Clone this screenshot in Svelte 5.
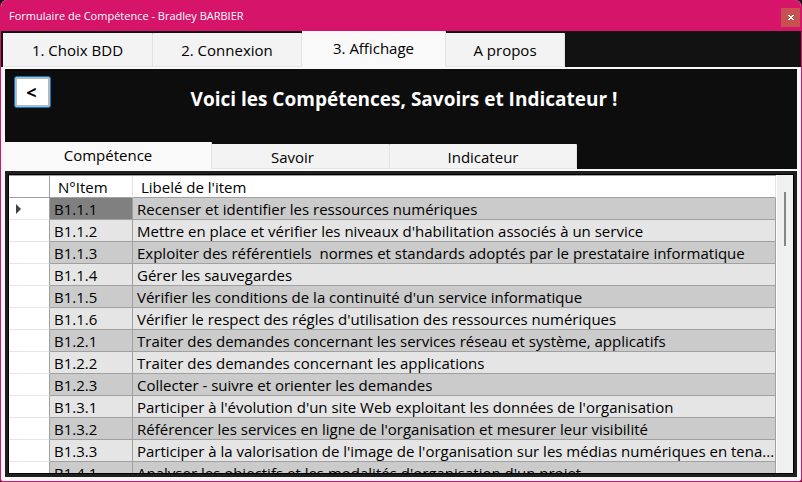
<script>
  const tabs = [
    { label: '1. Choix BDD', size: 150 },
    { label: '2. Connexion', size: 149 },
    { label: '3. Affichage', size: 144 },
    { label: 'A propos', size: 119 }
  ];
  const subTabs = [
    { label: 'Compétence', size: 207 },
    { label: 'Savoir', size: 178 },
    { label: 'Indicateur', size: 187 }
  ];
  const rows = [
    ['B1.1.1', 'Recenser et identifier les ressources numériques'],
    ['B1.1.2', "Mettre en place et vérifier les niveaux d'habilitation associés à un service"],
    ['B1.1.3', 'Exploiter des référentiels  normes et standards adoptés par le prestataire informatique'],
    ['B1.1.4', 'Gérer les sauvegardes'],
    ['B1.1.5', "Vérifier les conditions de la continuité d'un service informatique"],
    ['B1.1.6', "Vérifier le respect des régles d'utilisation des ressources numériques"],
    ['B1.2.1', 'Traiter des demandes concernant les services réseau et système, applicatifs'],
    ['B1.2.2', 'Traiter des demandes concernant les applications'],
    ['B1.2.3', 'Collecter - suivre et orienter les demandes'],
    ['B1.3.1', "Participer à l'évolution d'un site Web exploitant les données de l'organisation"],
    ['B1.3.2', "Référencer les services en ligne de l'organisation et mesurer leur visibilité"],
    ['B1.3.3', "Participer à la valorisation de l'image de l'organisation sur les médias numériques en tena..."],
    ['B1.4.1', "Analyser les objectifs et les modalités d'organisation d'un projet"]
  ];
  let activeTab = $state(2);
  let activeSub = $state(0);
  let selected = $state(0);
</script>

<div class="window">
  <header class="titlebar">
    <span class="title">Formulaire de Compétence - Bradley BARBIER</span>
    <button class="close" aria-label="Fermer">
      <svg width="6" height="5" viewBox="0 0 6 5" shape-rendering="crispEdges" aria-hidden="true">
        <path d="M0 0h2v1h2v-1h2v1h-1v1h-1v1h1v1h1v1h-2v-1h-2v1h-2v-1h1v-1h1v-1h-1v-1h-1z" fill="#fff" />
      </svg>
    </button>
  </header>

  <nav class="tabs" aria-label="Étapes">
    {#each tabs as tab, i}
      <button class="tab" class:active={activeTab === i} style:width="{tab.size}px" onclick={() => (activeTab = i)}>{tab.label}</button>
    {/each}
  </nav>

  <main class="page">
    <section class="banner">
      <button class="back">&lt;</button>
      <h1>Voici les Compétences, Savoirs et Indicateur !</h1>
    </section>

    <nav class="tabs sub" aria-label="Catégories">
      {#each subTabs as tab, i}
        <button class="tab" class:active={activeSub === i} class:spaced={tab.label === 'Savoir'} style:width="{tab.size}px" onclick={() => (activeSub = i)}>{tab.label}</button>
      {/each}
    </nav>

    <section class="frame">
      <div class="grid">
        <div class="viewport">
          <table>
            <colgroup>
              <col class="c-mark" />
              <col class="c-item" />
              <col />
            </colgroup>
            <thead>
              <tr>
                <td class="mark"></td>
                <th>N°Item</th>
                <th>Libelé de l'item</th>
              </tr>
            </thead>
            <tbody>
              {#each rows as [code, label], i}
                <tr onclick={() => (selected = i)}>
                  <td class="mark">
                    {#if selected === i}
                      <svg width="5" height="10" viewBox="0 0 5 10" aria-hidden="true"><path d="M0 0L5 5L0 10z" fill="#404040" /></svg>
                    {/if}
                  </td>
                  <td class:selected={selected === i}>{code}</td>
                  <td>{label}</td>
                </tr>
              {/each}
            </tbody>
          </table>
        </div>
        <div class="scrollbar"><div class="thumb"></div></div>
      </div>
    </section>
  </main>
</div>

<style>
  :global(body) {
    margin: 0;
    background: #201418;
  }
  .window {
    box-sizing: border-box;
    height: 100vh;
    display: flex;
    flex-direction: column;
    border: 1px solid #d5146a;
    border-top: 0;
    border-radius: 7px 7px 3px 3px;
    overflow: hidden;
    background: #f7f7f7;
    color: #000;
    font-family: 'Segoe UI', 'Open Sans', 'Noto Sans', sans-serif;
    font-size: 15px;
  }
  button {
    font: inherit;
    color: inherit;
    margin: 0;
    padding: 0;
  }
  .titlebar {
    flex: none;
    height: 31px;
    display: flex;
    align-items: center;
    justify-content: space-between;
    padding: 0 1px 0 8px;
    background: #d5146a;
    color: #fff;
    font-size: 11px;
  }
  .close {
    width: 19px;
    height: 19px;
    margin-top: 4px;
    display: flex;
    align-items: center;
    justify-content: center;
    border: 0;
    background: #c75050;
  }
  .tabs {
    flex: none;
    display: flex;
    align-items: flex-end;
    height: 36px;
    padding-left: 2px;
    background: #121212;
    border-bottom: 2px solid #f9f9f9;
  }
  .tab {
    box-sizing: border-box;
    height: 34px;
    border: 0;
    border-right: 1px solid #e2e2e2;
    border-bottom: 1px solid #e5e5e5;
    border-radius: 0 1px 0 0;
    background: #f3f3f3;
  }
  .tab.active {
    height: 36px;
    padding-bottom: 2px;
    border-bottom-color: #f9f9f9;
    background: #f9f9f9;
  }
  .page {
    flex: 1;
    min-height: 0;
    display: flex;
    flex-direction: column;
    margin: 0 4px 4px;
  }
  .banner {
    flex: none;
    display: flex;
    align-items: flex-start;
    height: 73px;
    background: #0d0d0d;
    color: #fff;
  }
  .back {
    box-sizing: border-box;
    flex: none;
    width: 37px;
    height: 32px;
    margin: 7px 0 0 9px;
    padding-right: 2px;
    border: 1px solid #0078d4;
    border-radius: 3px;
    box-shadow: inset 0 0 0 2px #b8b8b8;
    background: #fff;
    color: #000;
    font-size: 18px;
    font-weight: 700;
    line-height: 28px;
  }
  h1 {
    flex: 1;
    margin: 17px 40px 0 0;
    text-align: center;
    font-size: 19px;
    line-height: 26px;
    font-weight: 700;
  }
  .sub {
    height: 27px;
    padding-left: 0;
    background: #0d0d0d;
  }
  .sub .tab {
    height: 25px;
    padding-top: 2px;
  }
  .sub .tab.active {
    height: 27px;
  }
  .sub .spaced {
    padding-right: 16px;
  }
  .frame {
    flex: 1;
    min-height: 0;
    display: flex;
    padding: 3px;
    background: #1f1f1f;
  }
  .grid {
    flex: 1;
    min-width: 0;
    display: flex;
    border: 1px solid #000;
    background: #fff;
  }
  .viewport {
    flex: 1;
    min-width: 0;
    overflow: hidden;
    border-top: 1px solid #a0a0a0;
  }
  table {
    width: 100%;
    table-layout: fixed;
    border-collapse: separate;
    border-spacing: 0;
  }
  .c-mark {
    width: 41px;
  }
  .c-item {
    width: 83px;
  }
  th,
  td {
    box-sizing: border-box;
    height: 22px;
    padding: 1px 4px 0;
    border-right: 1px solid #a0a0a0;
    border-bottom: 1px solid #a0a0a0;
    line-height: 20px;
    vertical-align: top;
    text-align: left;
    font-weight: 400;
    white-space: pre;
    overflow: hidden;
  }
  th {
    padding: 2px 8px 0;
    border-right-color: #e5e5e5;
    line-height: 19px;
  }
  tbody tr {
    background: #e5e5e5;
  }
  tbody tr:nth-child(odd) {
    background: #cbcbcb;
  }
  .mark {
    padding: 0 7px;
    background: #fff;
    vertical-align: middle;
  }
  .mark svg {
    display: block;
  }
  tbody .mark {
    border-bottom-color: #e5e5e5;
  }
  td.selected {
    background: #808080;
  }
  .scrollbar {
    flex: none;
    display: flex;
    justify-content: center;
    width: 16px;
    padding-top: 17px;
    margin-left: 1px;
    box-sizing: border-box;
    background: #f0f0f0;
  }
  .thumb {
    width: 2px;
    height: 54px;
    background: #868686;
  }
</style>
